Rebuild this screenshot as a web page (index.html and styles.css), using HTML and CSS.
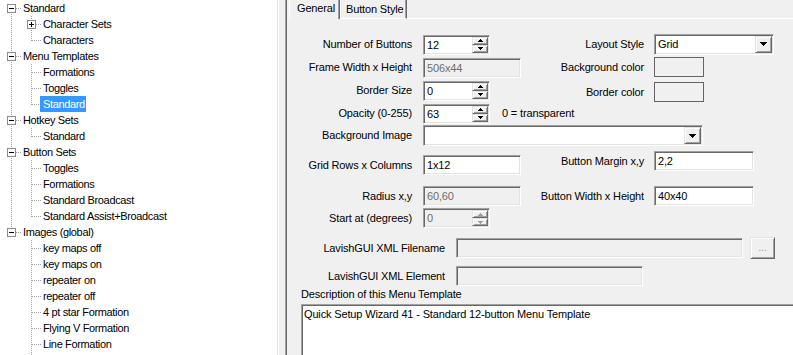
FILE: index.html
```html
<!DOCTYPE html>
<html lang="en">
<head>
    <meta charset="UTF-8">
    <title>Menu Templates - Standard</title>
    <link rel="stylesheet" href="styles.css">
</head>
<body>
<div class="app">
    <div class="tree">
        <div class="node"><span class="g first"><i class="box minus"></i></span><span class="label">Standard</span></div>
        <div class="node"><span class="g pipe"></span><span class="g tee"><i class="box plus"></i></span><span class="label">Character Sets</span></div>
        <div class="node"><span class="g pipe"></span><span class="g elbow"></span><span class="label">Characters</span></div>
        <div class="node"><span class="g tee"><i class="box minus"></i></span><span class="label">Menu Templates</span></div>
        <div class="node"><span class="g pipe"></span><span class="g tee"></span><span class="label">Formations</span></div>
        <div class="node"><span class="g pipe"></span><span class="g tee"></span><span class="label">Toggles</span></div>
        <div class="node"><span class="g pipe"></span><span class="g elbow"></span><span class="label sel">Standard</span></div>
        <div class="node"><span class="g tee"><i class="box minus"></i></span><span class="label">Hotkey Sets</span></div>
        <div class="node"><span class="g pipe"></span><span class="g elbow"></span><span class="label">Standard</span></div>
        <div class="node"><span class="g tee"><i class="box minus"></i></span><span class="label">Button Sets</span></div>
        <div class="node"><span class="g pipe"></span><span class="g tee"></span><span class="label">Toggles</span></div>
        <div class="node"><span class="g pipe"></span><span class="g tee"></span><span class="label">Formations</span></div>
        <div class="node"><span class="g pipe"></span><span class="g tee"></span><span class="label">Standard Broadcast</span></div>
        <div class="node"><span class="g pipe"></span><span class="g elbow"></span><span class="label">Standard Assist+Broadcast</span></div>
        <div class="node"><span class="g elbow"><i class="box minus"></i></span><span class="label">Images (global)</span></div>
        <div class="node"><span class="g"></span><span class="g tee"></span><span class="label">key maps off</span></div>
        <div class="node"><span class="g"></span><span class="g tee"></span><span class="label">key maps on</span></div>
        <div class="node"><span class="g"></span><span class="g tee"></span><span class="label">repeater on</span></div>
        <div class="node"><span class="g"></span><span class="g tee"></span><span class="label">repeater off</span></div>
        <div class="node"><span class="g"></span><span class="g tee"></span><span class="label">4 pt star Formation</span></div>
        <div class="node"><span class="g"></span><span class="g tee"></span><span class="label">Flying V Formation</span></div>
        <div class="node"><span class="g"></span><span class="g tee"></span><span class="label">Line Formation</span></div>
        <div class="node"><span class="g"></span><span class="g tee"></span><span class="label"></span></div>
    </div>

    <div class="panel">
        <div class="tabs">
            <div class="tab active">General</div>
            <div class="tab">Button Style</div>
            <div class="tab-fill"></div>
        </div>

        <div class="page">
            <div class="cols">
                <div class="col-left">
                    <div class="row r23">
                        <span class="lbl">Number of Buttons</span>
                        <div class="spin sunk">
                            <span class="val">12</span>
                            <span class="arrows">
                                <b class="raised"><svg width="5" height="3" viewBox="0 0 5 3"><path d="M2 0h1v1H2zM1 1h3v1H1zM0 2h5v1H0z"/></svg></b>
                                <b class="raised"><svg width="5" height="3" viewBox="0 0 5 3"><path d="M0 0h5v1H0zM1 1h3v1H1zM2 2h1v1H2z"/></svg></b>
                            </span>
                        </div>
                    </div>
                    <div class="row r23">
                        <span class="lbl">Frame Width x Height</span>
                        <div class="text sunk off w98">506x44</div>
                    </div>
                    <div class="row r23">
                        <span class="lbl">Border Size</span>
                        <div class="spin sunk">
                            <span class="val">0</span>
                            <span class="arrows">
                                <b class="raised"><svg width="5" height="3" viewBox="0 0 5 3"><path d="M2 0h1v1H2zM1 1h3v1H1zM0 2h5v1H0z"/></svg></b>
                                <b class="raised"><svg width="5" height="3" viewBox="0 0 5 3"><path d="M0 0h5v1H0zM1 1h3v1H1zM2 2h1v1H2z"/></svg></b>
                            </span>
                        </div>
                    </div>
                    <div class="row r23">
                        <span class="lbl">Opacity (0-255)</span>
                        <div class="spin sunk">
                            <span class="val">63</span>
                            <span class="arrows">
                                <b class="raised"><svg width="5" height="3" viewBox="0 0 5 3"><path d="M2 0h1v1H2zM1 1h3v1H1zM0 2h5v1H0z"/></svg></b>
                                <b class="raised"><svg width="5" height="3" viewBox="0 0 5 3"><path d="M0 0h5v1H0zM1 1h3v1H1zM2 2h1v1H2z"/></svg></b>
                            </span>
                        </div>
                        <span class="note">0 = transparent</span>
                    </div>
                </div>
                <div class="col-right">
                    <div class="row r22">
                        <span class="lbl">Layout Style</span>
                        <div class="combo sunk w120">
                            <span class="val">Grid</span>
                            <b class="drop raised"><svg width="7" height="4" viewBox="0 0 7 4"><path d="M0 0h7v1H0zM1 1h5v1H1zM2 2h3v1H2zM3 3h1v1H3z"/></svg></b>
                        </div>
                    </div>
                    <div class="row r24">
                        <span class="lbl">Background color</span>
                        <div class="swatch"></div>
                    </div>
                    <div class="row r26">
                        <span class="lbl">Border color</span>
                        <div class="swatch"></div>
                    </div>
                </div>
            </div>

            <div class="row r21">
                <span class="lbl">Background Image</span>
                <div class="combo sunk w280">
                    <span class="val"></span>
                    <b class="drop raised"><svg width="7" height="4" viewBox="0 0 7 4"><path d="M0 0h7v1H0zM1 1h5v1H1zM2 2h3v1H2zM3 3h1v1H3z"/></svg></b>
                </div>
            </div>

            <div class="cols">
                <div class="col-left mid-left">
                    <div class="row r20">
                        <span class="lbl">Grid Rows x Columns</span>
                        <div class="text sunk w98">1x12</div>
                    </div>
                    <div class="row r20 gap11">
                        <span class="lbl">Radius x,y</span>
                        <div class="text sunk off w98">60,60</div>
                    </div>
                    <div class="row r20 gap2">
                        <span class="lbl">Start at (degrees)</span>
                        <div class="spin sunk off">
                            <span class="val">0</span>
                            <span class="arrows">
                                <b class="raised"><svg width="5" height="3" viewBox="0 0 5 3"><path d="M2 0h1v1H2zM1 1h3v1H1zM0 2h5v1H0z"/></svg></b>
                                <b class="raised"><svg width="5" height="3" viewBox="0 0 5 3"><path d="M0 0h5v1H0zM1 1h3v1H1zM2 2h1v1H2z"/></svg></b>
                            </span>
                        </div>
                    </div>
                </div>
                <div class="col-right mid-right">
                    <div class="row r20">
                        <span class="lbl">Button Margin x,y</span>
                        <div class="text sunk w100">2,2</div>
                    </div>
                    <div class="row r20 gap15">
                        <span class="lbl">Button Width x Height</span>
                        <div class="text sunk w100">40x40</div>
                    </div>
                </div>
            </div>

            <div class="row r22 xml first-xml">
                <span class="lbl">LavishGUI XML Filename</span>
                <div class="text sunk off w287"></div>
                <div class="btn raised">...</div>
            </div>
            <div class="row r20 xml gap7">
                <span class="lbl">LavishGUI XML Element</span>
                <div class="text sunk off w187"></div>
            </div>

            <div class="desc-label">Description of this Menu Template</div>
            <div class="desc sunk">Quick Setup Wizard 41 - Standard 12-button Menu Template</div>
        </div>
    </div>
</div>
</body>
</html>
```

FILE: styles.css
```css
* {
    box-sizing: border-box;
}
body {
    margin: 0;
    font-family: "Liberation Sans", Arial, sans-serif;
    font-size: 11px;
    line-height: 13px;
    color: #000;
    background-color: #f0f0f0;
    overflow: hidden;
}
.app {
    display: flex;
    height: 355px;
}

/* tree */
.tree {
    width: 278px;
    flex: none;
    padding-left: 1px;
    background-color: #fff;
    border-right: 1px solid #e3e3e3;
    box-shadow: 1px 0 #fff;
    overflow: hidden;
    letter-spacing: -0.35px;
}
.node {
    display: flex;
    height: 16px;
    line-height: 16px;
    white-space: nowrap;
}
.g {
    width: 20px;
    height: 16px;
    flex: none;
    background-repeat: no-repeat;
    --dv: repeating-linear-gradient(#a0a0a0 0 1px, transparent 1px 2px);
    --dh: repeating-linear-gradient(90deg, #a0a0a0 0 1px, transparent 1px 2px);
}
.pipe {
    background-image: var(--dv);
    background-size: 1px 16px;
    background-position: 10px 0;
}
.tee {
    background-image: var(--dv), var(--dh);
    background-size: 1px 16px, 9px 1px;
    background-position: 10px 0, 11px 8px;
}
.elbow {
    background-image: var(--dv), var(--dh);
    background-size: 1px 9px, 9px 1px;
    background-position: 10px 0, 11px 8px;
}
.first {
    background-image: var(--dv), var(--dh);
    background-size: 1px 8px, 9px 1px;
    background-position: 10px 8px, 11px 8px;
}
.box {
    display: block;
    width: 9px;
    height: 9px;
    margin: 4px 0 0 6px;
    border: 1px solid #8c8c8c;
    background-color: #fff;
    background-repeat: no-repeat;
}
.minus {
    background-image: linear-gradient(#000, #000);
    background-size: 5px 1px;
    background-position: 1px 3px;
}
.plus {
    background-image: linear-gradient(#000, #000), linear-gradient(#000, #000);
    background-size: 5px 1px, 1px 5px;
    background-position: 1px 3px, 3px 1px;
}
.label {
    margin-left: -1px;
    padding: 0 1px 0 3px;
}
.label.sel {
    background-color: #3399ff;
    color: #fff;
}

/* right panel */
.panel {
    flex: 1;
    margin-left: 7px;
    padding-left: 1px;
    border-left: 1px solid #a0a0a0;
    box-shadow: inset 1px 0 #696969;
    overflow: hidden;
    letter-spacing: -0.15px;
}
.tabs {
    display: flex;
    align-items: flex-end;
    height: 19px;
    padding-left: 2px;
}
.tab {
    height: 19px;
    padding: 3px 0 0 5px;
    border-left: 1px solid #fff;
    border-right: 1px solid #696969;
    border-bottom: 1px solid #fff;
    box-shadow: inset -1px 0 #a0a0a0;
    width: 67px;
    white-space: nowrap;
}
.tab.active {
    width: 51px;
    padding: 2px 0 0 7px;
    border-bottom: none;
}
.tab-fill {
    flex: 1;
    height: 19px;
    border-bottom: 1px solid #fff;
}
.page {
    padding-top: 14px;
}
.cols {
    display: flex;
}
.col-left {
    width: 234px;
    flex: none;
}
.col-right {
    flex: 1;
}
.row {
    display: flex;
    align-items: center;
    white-space: nowrap;
}
.row > * {
    flex: none;
}
.r20 { height: 20px; }
.r21 { height: 21px; }
.r22 { height: 22px; }
.r23 { height: 23px; }
.r24 { height: 24px; }
.r26 { height: 26px; }
.gap2 { margin-top: 2px; }
.gap7 { margin-top: 7px; }
.gap11 { margin-top: 11px; }
.gap15 { margin-top: 15px; }
.mid-left {
    margin-top: 9px;
}
.mid-right {
    margin-top: 5px;
}
.first-xml {
    margin-top: 9px;
}
.lbl {
    width: 125px;
    margin-right: 11px;
    text-align: right;
}
.col-right .lbl {
    width: 123px;
    margin-right: 10px;
}
.xml .lbl {
    width: 158px;
}
.note {
    margin-left: 12px;
}

/* classic 3D edges */
.sunk {
    border: 1px solid;
    border-color: #a0a0a0 #fff #fff #a0a0a0;
    box-shadow: inset 1px 1px #696969, inset -1px -1px #e3e3e3;
    background-color: #fff;
}
.raised {
    background-color: #f0f0f0;
    border: 1px solid;
    border-color: #e3e3e3 #696969 #696969 #e3e3e3;
    box-shadow: inset 1px 1px #fff, inset -1px -1px #a0a0a0;
}
.off {
    background-color: #f0f0f0;
    color: #6d6d6d;
}
.text {
    height: 20px;
    padding: 3px 0 0 3px;
}
.w98 { width: 98px; }
.w100 { width: 100px; }
.w120 { width: 120px; }
.w187 { width: 187px; }
.w280 { width: 280px; }
.w287 { width: 287px; }

.spin {
    display: flex;
    width: 67px;
    height: 20px;
    padding: 1px;
}
.spin .val,
.combo .val {
    flex: 1;
    padding: 2px 0 0 2px;
}
.arrows {
    display: flex;
    flex-direction: column;
    width: 16px;
}
.arrows b {
    flex: 1;
    display: flex;
    align-items: center;
    justify-content: center;
}
svg path {
    fill: currentColor;
}
.off svg {
    color: #a0a0a0;
}
.combo {
    display: flex;
    height: 21px;
    padding: 1px;
}
.drop {
    width: 17px;
    display: flex;
    align-items: center;
    justify-content: center;
}
.swatch {
    width: 50px;
    height: 20px;
    border: 1px solid #646464;
    background-color: #f0f0f0;
}
.btn {
    width: 25px;
    height: 22px;
    margin-left: 7px;
    color: #a0a0a0;
    text-align: center;
    line-height: 18px;
}
.desc-label {
    margin-top: 2px;
    padding-left: 14px;
}
.desc {
    width: 520px;
    height: 70px;
    margin: 3px 0 0 14px;
    padding: 3px 0 0 2px;
    white-space: nowrap;
}
```
